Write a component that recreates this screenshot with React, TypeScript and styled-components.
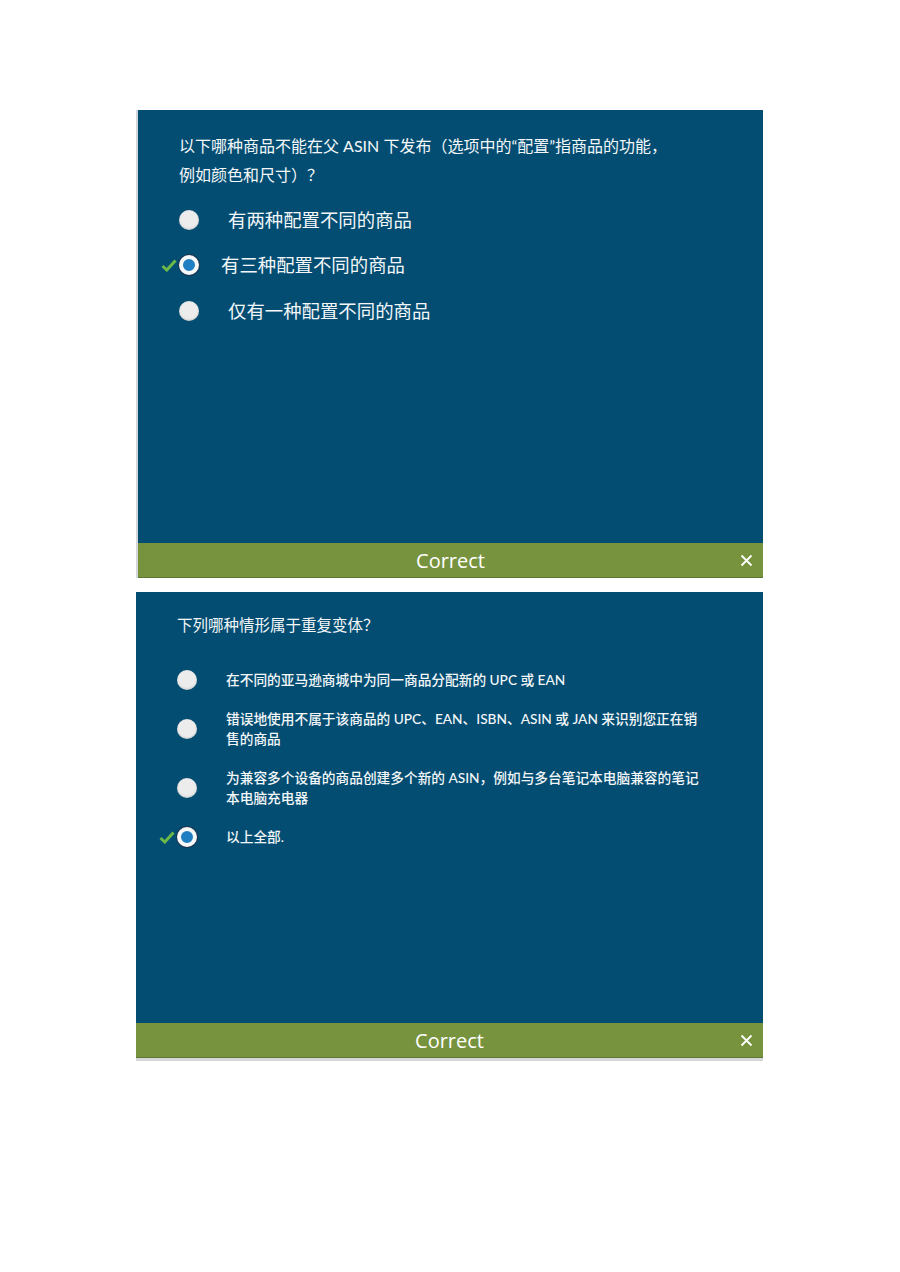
import React from 'react';
import styled, {createGlobalStyle} from "styled-components";

const GlobalStyle = createGlobalStyle`
  body {
    margin: 0;
    background: #ffffff;
    font-family: "Lato", "Noto Sans CJK SC", sans-serif;
  }
`

const Page = styled.div`
  width: 900px;
  height: 1272px;
  padding-top: 110px;
  box-sizing: border-box;
  display: flex;
  flex-direction: column;
  gap: 14px;
`

const Card = styled.section<{ $left: number; $edge?: boolean }>`
  margin-left: ${p => p.$left}px;
  width: ${p => 763 - p.$left}px;
  display: flex;
  flex-direction: column;
  box-sizing: border-box;
  border-left: ${p => p.$edge ? '2px solid #d3d7da' : 'none'};
`

const Body = styled.div<{ $height: number; $top: number }>`
  height: ${p => p.$height}px;
  background: #034d72;
  color: #f4f7f9;
  padding-top: ${p => p.$top}px;
  box-sizing: border-box;
`

const Question = styled.p<{ $size: number; $line: number; $indent: number; $after: number }>`
  margin: 0 0 ${p => p.$after}px 0;
  padding-left: ${p => p.$indent}px;
  font-size: ${p => p.$size}px;
  line-height: ${p => p.$line}px;
`

const Options = styled.div<{ $gap: number }>`
  display: flex;
  flex-direction: column;
  gap: ${p => p.$gap}px;
`

const Row = styled.div<{ $height?: number; $indent: number }>`
  display: flex;
  align-items: center;
  padding-left: ${p => p.$indent}px;
  min-height: ${p => p.$height ? `${p.$height}px` : 'auto'};
`

const CheckSlot = styled.div`
  width: 18px;
  height: 14px;
  display: flex;
  align-items: center;
`

const Radio = styled.span<{ $on?: boolean }>`
  width: 20px;
  height: 20px;
  border-radius: 50%;
  flex-shrink: 0;
  box-sizing: border-box;
  background: ${p => p.$on ? '#1f7fc2' : '#ececec'};
  border: ${p => p.$on ? '4px solid #f6f8fa' : 'none'};
  box-shadow: ${p => p.$on ? '0 0 0 1px #1a3550' : 'inset 0 -1px 2px rgba(0,0,0,0.15)'};
`

const Label = styled.span<{ $size: number; $line: number; $gap: number; $weight?: number }>`
  margin-left: ${p => p.$gap}px;
  font-size: ${p => p.$size}px;
  line-height: ${p => p.$line}px;
  font-weight: ${p => p.$weight ?? 400};
`

const Bar = styled.div`
  height: 35px;
  background: #77933e;
  border-bottom: 1px solid #5d7833;
  box-sizing: border-box;
  display: flex;
  align-items: center;
  justify-content: center;
  position: relative;
  color: #ffffff;
  font-family: "Open Sans", "Noto Sans", sans-serif;
  font-size: 20px;
`

const Close = styled.span`
  position: absolute;
  right: 10px;
  top: 11px;
  display: flex;
`

const Shade = styled.div`
  height: 3px;
  background: #d5d7d9;
`

const Check = () => (
    <svg width="16" height="13" viewBox="0 0 16 13">
        <polyline points="1.5,7 5.8,11 14.5,1.5" fill="none" stroke="#6cb848" strokeWidth="3"/>
    </svg>
)

const CloseIcon = () => (
    <svg width="13" height="13" viewBox="0 0 13 13">
        <path d="M1.5 1.5 L11.5 11.5 M11.5 1.5 L1.5 11.5" stroke="#ffffff" strokeWidth="1.8"/>
    </svg>
)

const first = [
    {text: '有两种配置不同的商品', on: false},
    {text: '有三种配置不同的商品', on: true},
    {text: '仅有一种配置不同的商品', on: false},
]

const second = [
    {lines: ['在不同的亚马逊商城中为同一商品分配新的 UPC 或 EAN'], on: false},
    {lines: ['错误地使用不属于该商品的 UPC、EAN、ISBN、ASIN 或 JAN 来识别您正在销', '售的商品'], on: false},
    {lines: ['为兼容多个设备的商品创建多个新的 ASIN，例如与多台笔记本电脑兼容的笔记', '本电脑充电器'], on: false},
    {lines: ['以上全部.'], on: true},
]

const App: React.FC = () => {
    return (
        <>
            <GlobalStyle/>
            <Page>
                <Card $left={136} $edge>
                    <Body $height={433} $top={21}>
                        <Question $size={16} $line={29} $indent={41} $after={8}>
                            以下哪种商品不能在父 ASIN 下发布（选项中的“配置”指商品的功能，<br/>
                            例如颜色和尺寸）？
                        </Question>
                        <Options $gap={0}>
                            {first.map(o => (
                                <Row key={o.text} $height={45.5} $indent={23}>
                                    <CheckSlot>{o.on && <Check/>}</CheckSlot>
                                    <Radio $on={o.on}/>
                                    <Label $size={18.4} $line={24} $gap={o.on ? 22 : 29}>{o.text}</Label>
                                </Row>
                            ))}
                        </Options>
                    </Body>
                    <Bar>
                        Correct
                        <Close><CloseIcon/></Close>
                    </Bar>
                </Card>

                <Card $left={136}>
                    <Body $height={431} $top={22}>
                        <Question $size={15.5} $line={22} $indent={41} $after={34}>
                            下列哪种情形属于重复变体？
                        </Question>
                        <Options $gap={19}>
                            {second.map(o => (
                                <Row key={o.lines[0]} $indent={23}>
                                    <CheckSlot>{o.on && <Check/>}</CheckSlot>
                                    <Radio $on={o.on}/>
                                    <Label $size={13.7} $line={20} $gap={29} $weight={500}>
                                        {o.lines.map((l, i) => (
                                            <React.Fragment key={l}>{i > 0 && <br/>}{l}</React.Fragment>
                                        ))}
                                    </Label>
                                </Row>
                            ))}
                        </Options>
                    </Body>
                    <Bar>
                        Correct
                        <Close><CloseIcon/></Close>
                    </Bar>
                    <Shade/>
                </Card>
            </Page>
        </>
    );
}

export default App;
